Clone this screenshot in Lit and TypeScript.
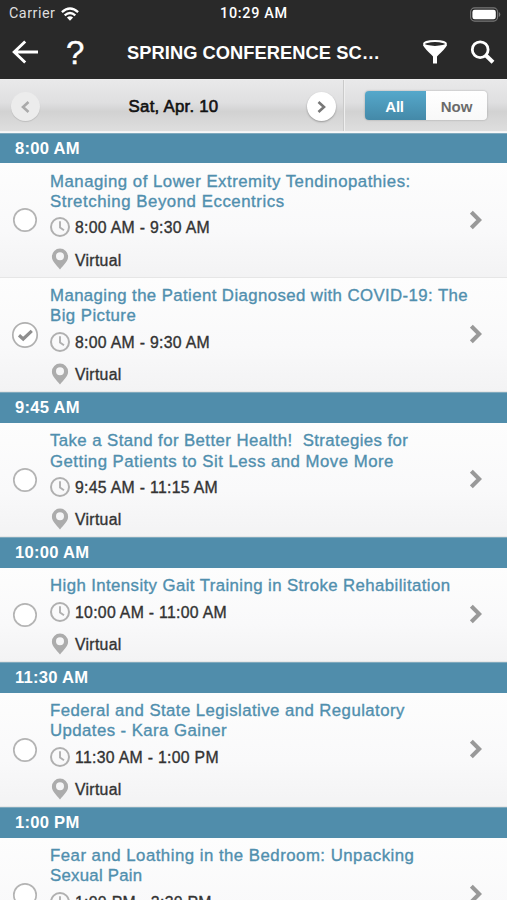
import { LitElement, html, css, svg } from "lit";
import { customElement, property } from "lit/decorators.js";
import { classMap } from "lit/directives/class-map.js";

interface TitleLine { text: string; spacing: number; }
interface Session { title: TitleLine[]; time: string; place: string; checked?: boolean; }
interface Slot { time: string; sessions: Session[]; }

const line = (text: string, spacing = 0.43): TitleLine => ({ text, spacing });

const slots: Slot[] = [
  { time: "8:00 AM", sessions: [
    { title: [line("Managing of Lower Extremity Tendinopathies:", 0.5), line("Stretching Beyond Eccentrics", 0.55)], time: "8:00 AM - 9:30 AM", place: "Virtual" },
    { title: [line("Managing the Patient Diagnosed with COVID-19: The", 0.41), line("Big Picture", 0.46)], time: "8:00 AM - 9:30 AM", place: "Virtual", checked: true },
  ] },
  { time: "9:45 AM", sessions: [
    { title: [line("Take a Stand for Better Health!\u00a0 Strategies for", 0.42), line("Getting Patients to Sit Less and Move More", 0.48)], time: "9:45 AM - 11:15 AM", place: "Virtual" },
  ] },
  { time: "10:00 AM", sessions: [
    { title: [line("High Intensity Gait Training in Stroke Rehabilitation", 0.41)], time: "10:00 AM - 11:00 AM", place: "Virtual" },
  ] },
  { time: "11:30 AM", sessions: [
    { title: [line("Federal and State Legislative and Regulatory"), line("Updates - Kara Gainer")], time: "11:30 AM - 1:00 PM", place: "Virtual" },
  ] },
  { time: "1:00 PM", sessions: [
    { title: [line("Fear and Loathing in the Bedroom: Unpacking", 0.49), line("Sexual Pain", 0.26)], time: "1:00 PM - 2:30 PM", place: "Virtual" },
  ] },
];

@customElement("session-row")
class SessionRow extends LitElement {
  @property({ attribute: false }) session!: Session;

  static styles = css`
    :host { display: flex; box-sizing: border-box; padding: 8.6px 0 0; background: linear-gradient(#fdfdfd, #f9f9fa 60%, #f3f3f4); border-bottom: 1px solid #e6e6e6; }
    .check { width: 50px; flex: none; display: flex; align-items: center; justify-content: center; }
    .check svg { margin-bottom: 8px; }
    .body { flex: 1; min-width: 0; height: 104.9px; }
    .body.short { height: 84.6px; }
    .title { font-size: 16.8px; line-height: 20.3px; color: #508fae; -webkit-text-stroke: 0.35px #508fae; white-space: nowrap; }
    .line { display: flex; align-items: center; font-size: 15.8px; letter-spacing: 0.3px; line-height: 20px; color: #333; -webkit-text-stroke: 0.35px #333; }
    .line svg { flex: none; margin-right: 5px; }
    .when { margin-top: 4px; height: 22px; }
    .when span { padding-top: 2px; }
    .where { margin-top: 10px; height: 22px; }
    .where span { padding-top: 3px; }
    .arrow { flex: none; width: 12px; padding-right: 25px; display: flex; align-items: center; }
    .arrow svg { margin-bottom: 9px; }
  `;

  render() {
    const s = this.session;
    return html`
      <div class="check">
        ${s.checked
          ? html`<svg width="28" height="28" viewBox="0 0 28 28"><circle cx="14" cy="14" r="12.2" fill="#fff" stroke="#b0b0b0" stroke-width="1.7"/><path d="M8 14.2 12.2 18 20.8 9.8" fill="none" stroke="#8e8e8e" stroke-width="3.2"/></svg>`
          : html`<svg width="28" height="28" viewBox="0 0 28 28"><circle cx="14" cy="14" r="11.2" fill="#fff" stroke="#b4b4b4" stroke-width="1.7"/></svg>`}
      </div>
      <div class=${classMap({ body: true, short: s.title.length === 1 })}>
        ${s.title.map((t) => html`<div class="title" style="letter-spacing:${t.spacing}px">${t.text}</div>`)}
        <div class="line when">
          <svg width="20" height="20" viewBox="0 0 20 20" fill="none" stroke="#b0b0b0"><circle cx="10" cy="10" r="9" stroke-width="2"/><path d="M10 4.3V10.5L14 13.2" stroke-width="1.9"/></svg>
          <span>${s.time}</span>
        </div>
        <div class="line where">
          <svg width="20" height="22" viewBox="0 0 20 22"><path fill="#acacac" fill-rule="evenodd" d="M10 .6a8.1 8.1 0 0 0-8.1 8.1C1.9 13.5 6.2 16.5 10 21.6 13.8 16.5 18.1 13.5 18.1 8.7A8.1 8.1 0 0 0 10 .6ZM10 4.3a4 4 0 1 1 0 8 4 4 0 0 1 0-8Z"/></svg>
          <span>${s.place}</span>
        </div>
      </div>
      <div class="arrow"><svg width="12" height="20" viewBox="0 0 12 20" fill="none" stroke="#999" stroke-width="4"><path d="M1.4 2.2 9.2 10 1.4 17.8"/></svg></div>
    `;
  }
}

const chevron = (dir: "left" | "right") => svg`<path d=${dir === "left" ? "M10.5 3 5 8 10.5 13" : "M5.5 3 11 8 5.5 13"} fill="none" stroke="currentColor" stroke-width="2.6"/>`;

@customElement("app-root")
class AppRoot extends LitElement {
  static styles = css`
    :host { display: flex; flex-direction: column; height: 900px; overflow: hidden; background: #f7f7f8; font-family: "Liberation Sans", Arial, sans-serif; }
    .top { flex: none; height: 79px; background: #292929; color: #fff; display: flex; flex-direction: column; }
    .status { display: grid; grid-template-columns: 1fr auto 1fr; align-items: center; height: 28px; padding: 0 6px 0 9px; font: 14.4px/28px Roboto, "Liberation Sans", sans-serif; }
    .carrier { display: flex; align-items: center; gap: 6px; letter-spacing: 0.5px; color: #dedede; }
    .clock { font-weight: 500; letter-spacing: 0.7px; margin-right: 2px; }
    .battery { justify-self: end; display: flex; }
    .nav { display: flex; align-items: center; height: 49px; padding: 0 12px 0 12px; }
    .help { font-size: 33px; line-height: 30px; margin-left: 27px; width: 19px; -webkit-text-stroke: 0.4px #fff; }
    .heading { flex: 1; text-align: center; font-weight: 700; font-size: 18.3px; letter-spacing: 0.05px; white-space: nowrap; }
    .nav svg { flex: none; }
    .funnel { margin-right: 22px; }
    .datebar { flex: none; height: 53px; box-sizing: border-box; border-top: 1px solid #eee; border-bottom: 1px solid #f3f3f3; background: linear-gradient(#e9e9ea, #dfdfe0 45%, #d2d2d2 62%, #dedede); display: flex; }
    .dates { width: 344px; box-sizing: border-box; padding: 2px 7px 0 11px; display: flex; align-items: center; justify-content: space-between; border-right: 1px solid #cacaca; }
    .round { width: 29px; height: 29px; border-radius: 50%; background: #fff; color: #777; display: flex; align-items: center; justify-content: center; box-shadow: 0 1px 2px rgba(0,0,0,.3); }
    .round.off { background: #ececec; color: #aaa; box-shadow: 0 1px 1px rgba(0,0,0,.12); }
    .day { font-size: 16.8px; letter-spacing: 0.25px; color: #111; -webkit-text-stroke: 0.6px #111; }
    .switcher { flex: 1; display: flex; align-items: center; justify-content: center; border-left: 1px solid #efefef; }
    .seg { display: flex; width: 122px; height: 29px; border-radius: 4px; overflow: hidden; box-shadow: 0 0 2px rgba(0,0,0,.3); font-weight: 700; font-size: 15px; line-height: 31px; text-align: center; }
    .seg span { flex: 1; background: linear-gradient(#fff, #f8f8f8); color: #6b6b6b; }
    .seg .on { background: linear-gradient(#55a8cb, #4489a8); color: #fff; letter-spacing: -0.3px; text-indent: -2px; }
    .slot { flex: none; height: 30.6px; box-sizing: border-box; border-top: 1px solid #7fa9bd; background: #508dab; color: #fff; font-weight: 700; font-size: 16.6px; letter-spacing: 0.25px; line-height: 29.6px; padding-left: 15px; }
    .list { display: flex; flex-direction: column; margin-top: 0.5px; }
    session-row { flex: none; }
  `;

  render() {
    return html`
      <header class="top">
        <div class="status">
          <span class="carrier">Carrier
            <svg width="18" height="14" viewBox="0 0 18 14"><g fill="none" stroke="#fff" stroke-width="2.3"><path d="M.9 5.2Q9-2.2 17.1 5.2"/><path d="M3.7 8.3Q9 3.6 14.3 8.3"/></g><path d="M5.9 10.5Q9 8 12.1 10.5L9 13.7Z" fill="#fff"/></svg>
          </span>
          <span class="clock">10:29 AM</span>
          <svg class="battery" width="31" height="15" viewBox="0 0 31 15"><rect x=".6" y=".9" width="27" height="13.2" rx="4" fill="none" stroke="#777" stroke-width="1.1"/><rect x="2.4" y="2.7" width="23.4" height="9.6" rx="2.3" fill="#fff"/><path d="M28.8 5v5q1.5-.7 1.5-2.5T28.8 5Z" fill="#777"/></svg>
        </div>
        <div class="nav">
          <svg width="27" height="26" viewBox="0 0 27 26" fill="none" stroke="#fff" stroke-width="2.9"><path d="M13.2 1.500 2.2 12 13.2 22.500M2.2 12H26"/></svg>
          <span class="help">?</span>
          <span class="heading">SPRING CONFERENCE SC…</span>
          <svg class="funnel" width="26" height="25" viewBox="0 0 26 25"><path d="M1 5C3 9.5 9 14 11 16.500V23.500H15V16.500C17 14 23 9.5 25 5Z" fill="#fff"/><ellipse cx="13" cy="4" rx="11" ry="2.900" fill="#292929" stroke="#fff" stroke-width="2"/></svg>
          <svg width="25" height="25" viewBox="0 0 25 25" fill="none" stroke="#fff"><circle cx="10.2" cy="9.7" r="7.9" stroke-width="2.8"/><path d="M15.5 15 23 22.3" stroke-width="4"/></svg>
        </div>
      </header>
      <div class="datebar">
        <div class="dates">
          <span class="round off"><svg width="16" height="16" viewBox="0 0 16 16">${chevron("left")}</svg></span>
          <span class="day">Sat, Apr. 10</span>
          <span class="round"><svg width="16" height="16" viewBox="0 0 16 16">${chevron("right")}</svg></span>
        </div>
        <div class="switcher"><div class="seg"><span class="on">All</span><span>Now</span></div></div>
      </div>
      <main class="list">
        ${slots.map((slot) => html`
          <div class="slot">${slot.time}</div>
          ${slot.sessions.map((s) => html`<session-row .session=${s}></session-row>`)}
        `)}
      </main>
    `;
  }
}
